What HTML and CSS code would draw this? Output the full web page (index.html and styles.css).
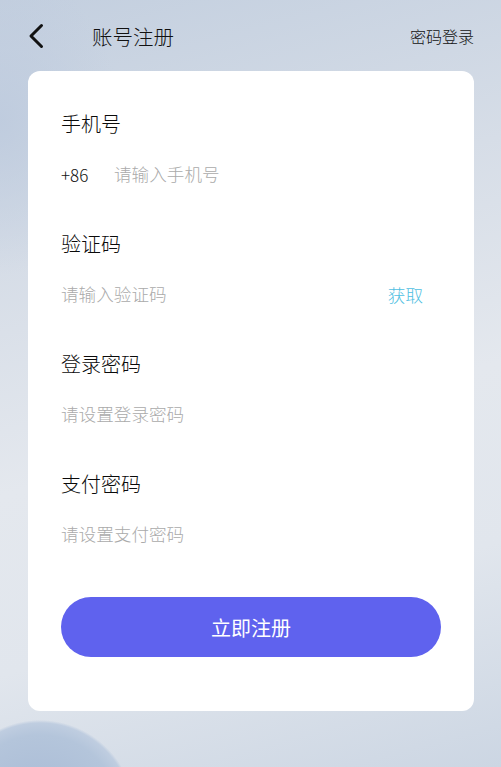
FILE: index.html
```html
<!DOCTYPE html>
<html lang="zh-CN">
<head>
<meta charset="utf-8">
<title>账号注册</title>
<link rel="stylesheet" href="styles.css">
</head>
<body>
<div class="page">
  <header class="topbar">
    <a class="back" href="#" aria-label="返回">
      <svg width="16" height="26" viewBox="0 0 16 26"><polyline points="13.5,2.5 3,13 13.5,23.5" fill="none" stroke="#111" stroke-width="3" stroke-linecap="round" stroke-linejoin="round"/></svg>
    </a>
    <h1 class="title">账号注册</h1>
    <a class="switch" href="#">密码登录</a>
  </header>
  <main class="card">
    <div class="field">
      <div class="label">手机号</div>
      <div class="row">
        <span class="prefix">+86</span>
        <input class="input" type="tel" placeholder="请输入手机号">
      </div>
    </div>
    <div class="field">
      <div class="label">验证码</div>
      <div class="row">
        <input class="input" type="text" placeholder="请输入验证码">
        <a class="code" href="#">获取</a>
      </div>
    </div>
    <div class="field">
      <div class="label">登录密码</div>
      <div class="row">
        <input class="input" type="password" placeholder="请设置登录密码">
      </div>
    </div>
    <div class="field">
      <div class="label">支付密码</div>
      <div class="row">
        <input class="input" type="password" placeholder="请设置支付密码">
      </div>
    </div>
    <button class="submit" type="button">立即注册</button>
  </main>
</div>
</body>
</html>
```

FILE: styles.css
```css
* { box-sizing: border-box; }
html, body { margin: 0; padding: 0; }
body {
  font-family: "Noto Sans CJK SC", "Noto Sans", sans-serif;
  color: #1a1a1a;
}
.page {
  width: 501px;
  height: 767px;
  overflow: hidden;
  background:
    radial-gradient(circle at 40px 815px, #a7b9d4 0, #b4c5db 80px, #bfcde0 92px, rgba(200,212,227,0) 95px),
    radial-gradient(ellipse at 0 120px, rgba(190,203,222,0.9) 0, rgba(200,212,227,0) 120px),
    linear-gradient(165deg, #c3cfdf 0%, #d6dde7 30%, #e4e8ee 55%, #e1e6ed 75%, #ccd6e3 100%);
}
.topbar {
  height: 71px;
  padding: 0 27px 0 28px;
  display: flex;
  align-items: center;
}
.back {
  display: flex;
  width: 16px;
  height: 26px;
}
.title {
  margin: 0 0 0 48px;
  font-size: 20.5px;
  font-weight: 300;
  color: #111;
  flex: 1;
}
.switch {
  font-size: 16px;
  font-weight: 300;
  color: #111;
  text-decoration: none;
}
.card {
  margin: 0 27px 0 28px;
  height: 640px;
  background: #fff;
  border-radius: 12px;
  padding: 40px 33px 0 33px;
  display: flex;
  flex-direction: column;
}
.field {
  display: flex;
  flex-direction: column;
  gap: 24px;
  margin-bottom: 44px;
}
.label {
  font-size: 20px;
  font-weight: 300;
  line-height: 26px;
  color: #0a0a0a;
}
.row {
  display: flex;
  align-items: center;
  height: 26px;
  padding-right: 18px;
}
.prefix {
  font-size: 17px;
  font-weight: 300;
  color: #111;
  width: 53px;
  flex: none;
}
.input {
  flex: 1;
  min-width: 0;
  border: 0;
  outline: 0;
  padding: 0;
  background: transparent;
  font-family: inherit;
  font-size: 17.6px;
  font-weight: 300;
  line-height: 26px;
  color: #222;
}
.input::placeholder { color: #aaaaaa; }
.code {
  font-size: 17.6px;
  font-weight: 300;
  color: #4fc0e2;
  text-decoration: none;
}
.submit {
  margin-top: 6px;
  height: 60px;
  border: 0;
  border-radius: 30px;
  background: #5f62ee;
  color: #fff;
  font-family: inherit;
  font-size: 20px;
  font-weight: 400;
  cursor: pointer;
}
```
